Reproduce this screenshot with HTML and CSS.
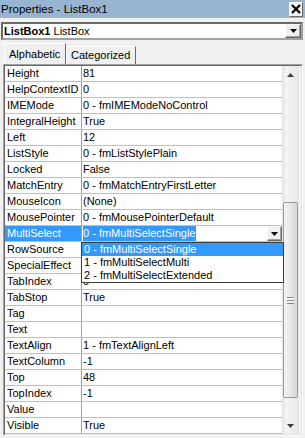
FILE: index.html
```html
<!DOCTYPE html>
<html lang="en">
<head>
  <meta charset="UTF-8" />
  <title>Properties - ListBox1</title>
  <link rel="stylesheet" href="styles.css">
</head>
<body>
  <div class="window">
    <div class="titlebar">
      <span class="title">Properties - ListBox1</span>
      <span class="close">
        <svg width="10" height="10" viewBox="0 0 10 10"><path d="M1 1 L9 9 M9 1 L1 9" stroke="#000" stroke-width="2.2"/></svg>
      </span>
    </div>

    <div class="objcombo">
      <span class="objtext"><b>ListBox1</b> ListBox</span>
      <span class="btn combo-btn">
        <svg width="7" height="4" viewBox="0 0 7 4"><path d="M0 0 H7 L3.5 4 Z" fill="#000"/></svg>
      </span>
    </div>

    <div class="tabs">
      <div class="tab active">Alphabetic</div>
      <div class="tab">Categorized</div>
    </div>

    <div class="page">
      <div class="grid">
        <div class="rows">
          <div class="row"><div class="name">Height</div><div class="value">81</div></div>
          <div class="row"><div class="name">HelpContextID</div><div class="value">0</div></div>
          <div class="row"><div class="name">IMEMode</div><div class="value">0 - fmIMEModeNoControl</div></div>
          <div class="row"><div class="name">IntegralHeight</div><div class="value">True</div></div>
          <div class="row"><div class="name">Left</div><div class="value">12</div></div>
          <div class="row"><div class="name">ListStyle</div><div class="value">0 - fmListStylePlain</div></div>
          <div class="row"><div class="name">Locked</div><div class="value">False</div></div>
          <div class="row"><div class="name">MatchEntry</div><div class="value">0 - fmMatchEntryFirstLetter</div></div>
          <div class="row"><div class="name">MouseIcon</div><div class="value">(None)</div></div>
          <div class="row"><div class="name">MousePointer</div><div class="value">0 - fmMousePointerDefault</div></div>
          <div class="row selected">
            <div class="name">MultiSelect</div>
            <div class="value">
              <span class="sel-text">0 - fmMultiSelectSingle</span>
              <span class="btn cell-btn">
                <svg width="7" height="4" viewBox="0 0 7 4"><path d="M0 0 H7 L3.5 4 Z" fill="#000"/></svg>
              </span>
            </div>
          </div>
          <div class="row"><div class="name">RowSource</div><div class="value"></div></div>
          <!-- value hidden under the open list -->
          <div class="row"><div class="name">SpecialEffect</div><div class="value"></div></div>
          <div class="row"><div class="name">TabIndex</div><div class="value">0</div></div>
          <div class="row"><div class="name">TabStop</div><div class="value">True</div></div>
          <div class="row"><div class="name">Tag</div><div class="value"></div></div>
          <div class="row"><div class="name">Text</div><div class="value"></div></div>
          <div class="row"><div class="name">TextAlign</div><div class="value">1 - fmTextAlignLeft</div></div>
          <div class="row"><div class="name">TextColumn</div><div class="value">-1</div></div>
          <div class="row"><div class="name">Top</div><div class="value">48</div></div>
          <div class="row"><div class="name">TopIndex</div><div class="value">-1</div></div>
          <div class="row"><div class="name">Value</div><div class="value"></div></div>
          <div class="row"><div class="name">Visible</div><div class="value">True</div></div>
        </div>

        <div class="scrollbar">
          <div class="arrow">
            <svg width="7" height="4" viewBox="0 0 7 4"><path d="M0 4 H7 L3.5 0 Z" fill="#404040"/></svg>
          </div>
          <div class="track">
            <div class="thumb">
              <span class="grip"></span>
            </div>
          </div>
          <div class="arrow">
            <svg width="7" height="4" viewBox="0 0 7 4"><path d="M0 0 H7 L3.5 4 Z" fill="#404040"/></svg>
          </div>
        </div>

        <!-- open dropdown for MultiSelect -->
        <div class="dropdown">
          <div class="item current">0 - fmMultiSelectSingle</div>
          <div class="item">1 - fmMultiSelectMulti</div>
          <div class="item">2 - fmMultiSelectExtended</div>
        </div>
      </div>
    </div>
  </div>
</body>
</html>
```

FILE: styles.css
```css
body {
  margin: 0;
  padding: 0;
  background: #f0f0f0;
  font-family: 'Liberation Sans', Arial, sans-serif;
  font-size: 11px;
  color: #000;
}

.window {
  width: 305px;
  height: 438px;
  overflow: hidden;
}

.titlebar {
  height: 18px;
  background: #99b4d1;
  display: flex;
  align-items: center;
  justify-content: space-between;
}

.title {
  font-size: 11.5px;
  padding-left: 1px;
  line-height: 18px;
}

.close {
  width: 12px;
  height: 13px;
  margin-right: 2px;
  background: #f0f0f0;
  border: 1px solid;
  border-color: #fff #696969 #696969 #fff;
  display: flex;
  align-items: center;
  justify-content: center;
}

.objcombo {
  margin: 4px 2px 0 1px;
  height: 14px;
  background: #fff;
  border: 2px solid;
  border-color: #696969 #a0a0a0 #a0a0a0 #696969;
  display: flex;
  align-items: center;
  justify-content: space-between;
}

.objtext {
  padding-left: 1px;
  line-height: 14px;
}

.btn {
  background: #f0f0f0;
  border: 1px solid;
  border-color: #fff #696969 #696969 #fff;
  box-shadow: inset -1px -1px 0 #a0a0a0;
  display: flex;
  align-items: center;
  justify-content: center;
  box-sizing: border-box;
}

.combo-btn {
  width: 16px;
  height: 14px;
}

.tabs {
  height: 22px;
  margin: 2px 0 0 4px;
  display: flex;
  align-items: flex-end;
}

.tab {
  height: 18px;
  line-height: 17px;
  padding: 0 5px 0 4px;
  border: 1px solid;
  border-color: #fff #696969 transparent #fff;
  border-bottom: none;
  box-sizing: border-box;
}

.tab.active {
  height: 21px;
  line-height: 20px;
  width: 62px;
}

.page {
  margin: 0 2px 0 3px;
  border: 1px solid;
  border-color: #a0a0a0 #fff #fff #a0a0a0;
}

.grid {
  position: relative;
  display: flex;
  border: 1px solid;
  border-color: #696969 #e3e3e3 #e3e3e3 #696969;
  padding-right: 2px;
}

.rows {
  width: 277px;
  background: #fff;
}

.row {
  display: flex;
  height: 15px;
  border-bottom: 1px solid #c0c0c0;
  line-height: 15px;
  white-space: nowrap;
}

.name {
  width: 74px;
  padding-left: 2px;
  border-right: 1px solid #a0a0a0;
  overflow: hidden;
}

.value {
  flex: 1;
  padding-left: 1px;
  display: flex;
  justify-content: space-between;
  overflow: hidden;
}

.selected .name {
  background: #3399ff;
  color: #fff;
}

.sel-text {
  background: #3399ff;
  color: #fff;
}

.cell-btn {
  width: 15px;
  height: 15px;
}

.scrollbar {
  width: 17px;
  display: flex;
  flex-direction: column;
  background: linear-gradient(to right, #e2e2e2, #f3f3f3 25%, #ececec 70%, #e6e6e6);
}

.arrow {
  height: 17px;
  display: flex;
  align-items: center;
  justify-content: center;
}

.track {
  flex: 1;
  padding-top: 119px;
}

.thumb {
  width: 13px;
  height: 194px;
  margin-left: 1px;
  border: 1px solid #9b9b9b;
  border-radius: 2px;
  background: linear-gradient(to right, #f4f4f4, #e8e8e8 50%, #d6d6d6);
  display: flex;
  align-items: center;
  justify-content: center;
}

.grip {
  width: 7px;
  height: 5px;
  border-top: 1px solid #8a8a8a;
  border-bottom: 1px solid #8a8a8a;
  background: linear-gradient(#fff 0 1px, transparent 1px 2px, #8a8a8a 2px 3px, #fff 3px 4px, transparent 4px);
}

.dropdown {
  position: absolute;
  left: 76px;
  top: 176px;
  width: 201px;
  background: #fff;
  border: 1px solid #3c3c3c;
}

.item {
  height: 13px;
  line-height: 13px;
  padding-left: 2px;
  white-space: nowrap;
}

.item.current {
  background: #3399ff;
  color: #fff;
}
```
